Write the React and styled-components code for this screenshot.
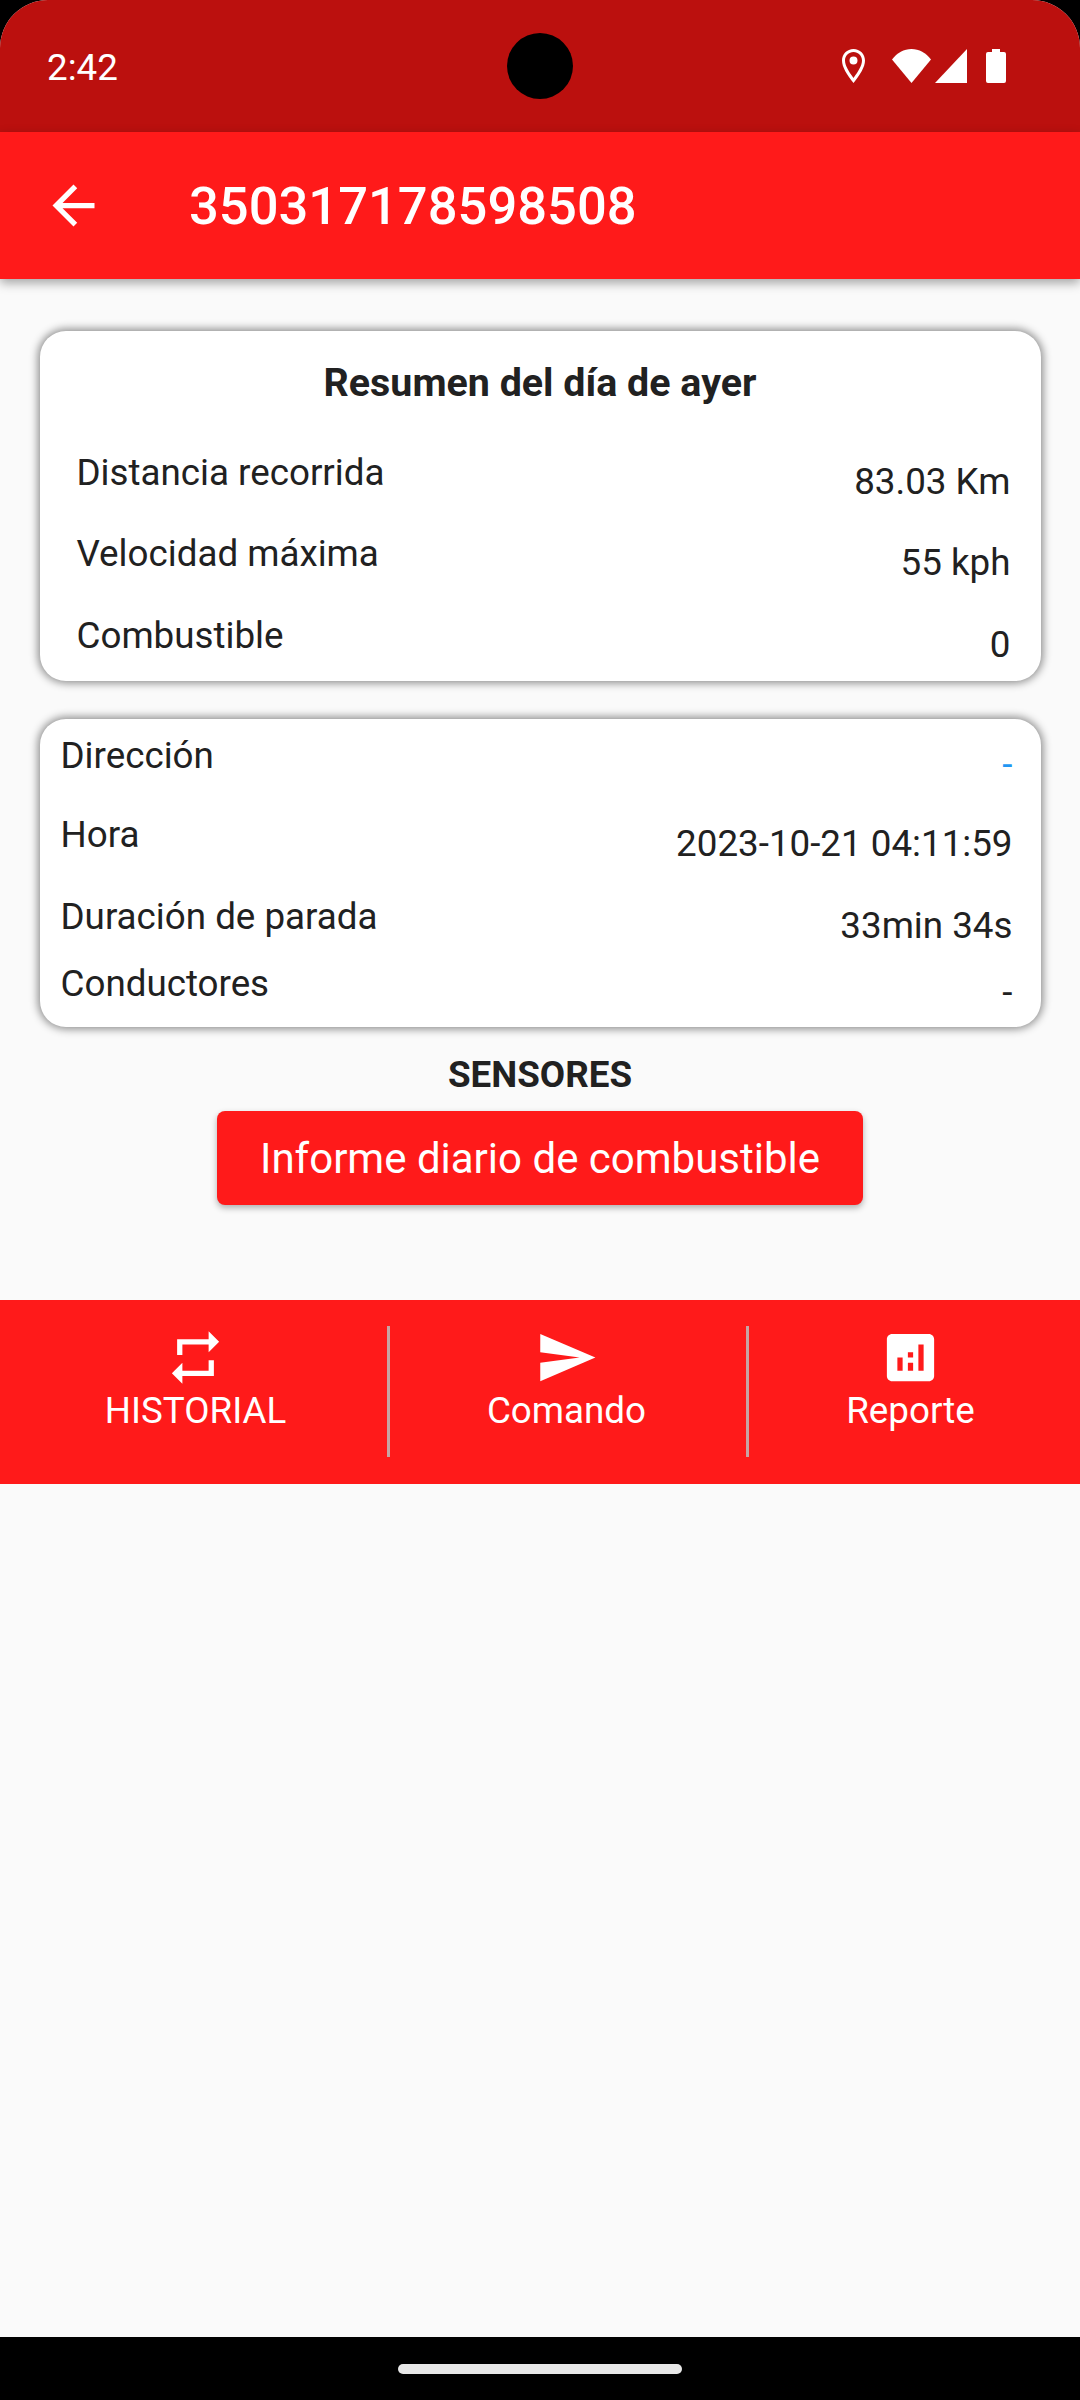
import React from "react";
import styled, { createGlobalStyle } from "styled-components";

const GlobalStyle = createGlobalStyle`
  html, body { margin: 0; padding: 0; background: #000; }
  * { box-sizing: border-box; }
`;

const RED = "#ff1a1a";

// whole screen: status bar, app bar, content, android nav bar
const Screen = styled.div`
  width: 1080px;
  height: 2400px;
  display: flex;
  flex-direction: column;
  background: #000;
  font-family: Roboto, "Liberation Sans", sans-serif;
  color: #212121;
  overflow: hidden;
`;

const Display = styled.div`
  flex: 1;
  display: flex;
  flex-direction: column;
  background: #fafafa;
  border-radius: 48px 48px 0 0;
  overflow: hidden;
`;

const StatusBar = styled.div`
  position: relative;
  height: 132px;
  flex: none;
  display: flex;
  align-items: center;
  justify-content: space-between;
  padding: 3px 74px 0 47px;
  background: #bb100e;
  color: #fff;
  font-size: 36.75px;
`;

const Clock = styled.span`
  line-height: 44px;
`;

// камера поверх статус-бара
const Camera = styled.div`
  position: absolute;
  left: 507px;
  top: 33px;
  width: 66px;
  height: 66px;
  border-radius: 50%;
  background: #000;
`;

const StatusIcons = styled.div`
  display: flex;
  align-items: center;
  margin-top: -3px;
`;

const StatusIcon = styled.svg`
  display: block;
  height: 34px;
  width: ${(props) => props.$w}px;
  margin-left: ${(props) => props.$gap}px;
  fill: #fff;
`;

const AppBar = styled.header`
  position: relative;
  z-index: 1;
  height: 147px;
  flex: none;
  display: flex;
  align-items: center;
  padding-left: 42px;
  background: ${RED};
  box-shadow: 0 4px 10px rgba(0, 0, 0, 0.35);
`;

const BackIcon = styled.svg`
  display: block;
  width: 63px;
  height: 63px;
  fill: #fff;
`;

const Title = styled.h1`
  margin: 0 0 0 84px;
  font-size: 52.5px;
  font-weight: 500;
  line-height: 62px;
  color: #fff;
`;

const Content = styled.main`
  flex: 1;
  display: flex;
  flex-direction: column;
`;

const Cards = styled.section`
  display: flex;
  flex-direction: column;
  align-items: center;
  padding-top: 52px;
`;

const Card = styled.div`
  width: 1001px;
  height: ${(props) => props.$h}px;
  margin-bottom: ${(props) => props.$mb}px;
  padding: ${(props) => props.$pad};
  background: #fff;
  border-radius: 26px;
  box-shadow: 0 0 9px 2px rgba(0, 0, 0, 0.45);
`;

const CardTitle = styled.h2`
  margin: 0;
  height: 90px;
  padding-right: 7px;
  font-size: 39.4px;
  font-weight: 700;
  line-height: 44px;
  text-align: center;
  color: #212121;
`;

const InfoRow = styled.div`
  display: flex;
  justify-content: space-between;
  height: ${(props) => props.$h}px;
  font-size: 36.75px;
  line-height: 44px;
`;

const Label = styled.span`
  color: #212121;
`;

const Value = styled.span`
  margin-top: 9px;
  color: ${(props) => (props.$link ? "#2196f3" : "#212121")};
`;

const SectionTitle = styled.h3`
  margin: 0;
  height: 58px;
  font-size: 36.75px;
  font-weight: 700;
  line-height: 44px;
  text-align: center;
  color: #212121;
`;

const ReportButton = styled.button`
  display: block;
  width: 646px;
  height: 94px;
  margin: 0 auto;
  padding: 0;
  border: 0;
  border-radius: 8px;
  background: ${RED};
  color: #fff;
  font-family: inherit;
  font-size: 42px;
  box-shadow: 0 3px 6px rgba(0, 0, 0, 0.3);
`;

const ActionBar = styled.nav`
  height: 184px;
  margin-top: 95px;
  padding-top: 26px;
  display: grid;
  grid-template-columns: 387px 359px 334px;
  align-items: start;
  background: ${RED};
`;

const Action = styled.div`
  height: 131px;
  display: flex;
  flex-direction: column;
  align-items: center;
  padding: ${(props) => props.$pad || 0};
  border-left: ${(props) => (props.$divider ? "3px solid #c8a4a4" : "none")};
  color: #fff;
`;

const ActionIcon = styled.svg`
  display: block;
  width: 63px;
  height: 63px;
  fill: #fff;
`;

const ActionLabel = styled.span`
  font-size: 36.75px;
  line-height: 44px;
`;

const NavBar = styled.div`
  height: 63px;
  flex: none;
  display: flex;
  align-items: center;
  justify-content: center;
  background: #000;
`;

const HomePill = styled.div`
  width: 284px;
  height: 10px;
  border-radius: 5px;
  background: #e8e8e8;
`;

const summary = [
  { label: "Distancia recorrida", value: "83.03 Km", h: 81 },
  { label: "Velocidad máxima", value: "55 kph", h: 82 },
  { label: "Combustible", value: "0", h: 60 },
];

const details = [
  { label: "Dirección", value: "-", h: 79, link: true },
  { label: "Hora", value: "2023-10-21 04:11:59", h: 82 },
  { label: "Duración de parada", value: "33min 34s", h: 67 },
  { label: "Conductores", value: "-", h: 60 },
];

const actions = [
  {
    label: "HISTORIAL",
    pad: "0 0 0 4px",
    icon: "M7 7h10v3l4-4-4-4v3H5v6h2V7zm10 10H7v-3l-4 4 4 4v-3h12v-6h-2v4z",
  },
  {
    label: "Comando",
    divider: true,
    pad: "0 3px 0 0",
    icon: "M2.01 21L23 12 2.01 3 2 10l15 2-15 2z",
  },
  {
    label: "Reporte",
    divider: true,
    pad: "0 8px 0 0",
    icon: "M19 3H5c-1.1 0-2 .9-2 2v14c0 1.1.9 2 2 2h14c1.1 0 2-.9 2-2V5c0-1.1-.9-2-2-2zM9 17H7v-5h2v5zm4 0h-2v-3h2v3zm0-5h-2v-2h2v2zm4 5h-2V7h2v10z",
  },
];

export default function App() {
  return (
    <Screen>
      <GlobalStyle />
      <Display>
        <StatusBar>
          <Clock>2:42</Clock>
          <Camera />
          <StatusIcons>
            <StatusIcon $w={23} $gap={0} viewBox="0 0 23 34">
              <path
                fillRule="evenodd"
                d="M11.5 0C5.1 0 0 5 0 11.5 0 18 5 26 11.5 34 18 26 23 18 23 11.5 23 5 17.9 0 11.5 0zm0 3c4.8 0 8.5 3.7 8.5 8.5 0 4.6-3.3 10.5-8.5 17.4C6.3 22 3 16.1 3 11.5 3 6.7 6.700 3 11.500 3zm0 4.500a4 4 0 1 0 0 8 4 4 0 0 0 0-8z"
              />
            </StatusIcon>
            <StatusIcon $w={39} $gap={27} viewBox="0 0 39 34">
              <path d="M0 10.500C5 4 12 0 19.500 0S34 4 39 10.500L19.500 34z" />
            </StatusIcon>
            <StatusIcon $w={32} $gap={4} viewBox="0 0 32 34">
              <path d="M32 0v34H0z" />
            </StatusIcon>
            <StatusIcon $w={20} $gap={19} viewBox="0 0 20 34">
              <path d="M6 0h8v3h4a2 2 0 0 1 2 2v27a2 2 0 0 1-2 2H2a2 2 0 0 1-2-2V5a2 2 0 0 1 2-2h4z" />
            </StatusIcon>
          </StatusIcons>
        </StatusBar>

        <AppBar>
          <BackIcon viewBox="0 0 24 24">
            <path d="M20 11H7.830l5.590-5.590L12 4l-8 8 8 8 1.410-1.410L7.830 13H20v-2z" />
          </BackIcon>
          <Title>350317178598508</Title>
        </AppBar>

        <Content>
          <Cards>
            <Card $h={350} $mb={38} $pad="30px 30px 0 37px">
              <CardTitle>Resumen del día de ayer</CardTitle>
              {summary.map((row) => (
                <InfoRow key={row.label} $h={row.h}>
                  <Label>{row.label}</Label>
                  <Value>{row.value}</Value>
                </InfoRow>
              ))}
            </Card>
            <Card $h={308} $mb={26} $pad="15px 28px 0 21px">
              {details.map((row) => (
                <InfoRow key={row.label} $h={row.h}>
                  <Label>{row.label}</Label>
                  <Value $link={row.link}>{row.value}</Value>
                </InfoRow>
              ))}
            </Card>
          </Cards>

          <SectionTitle>SENSORES</SectionTitle>
          <ReportButton>Informe diario de combustible</ReportButton>

          <ActionBar>
            {actions.map((action) => (
              <Action key={action.label} $divider={action.divider} $pad={action.pad}>
                <ActionIcon viewBox="0 0 24 24">
                  <path d={action.icon} />
                </ActionIcon>
                <ActionLabel>{action.label}</ActionLabel>
              </Action>
            ))}
          </ActionBar>
        </Content>
      </Display>

      <NavBar>
        <HomePill />
      </NavBar>
    </Screen>
  );
}
